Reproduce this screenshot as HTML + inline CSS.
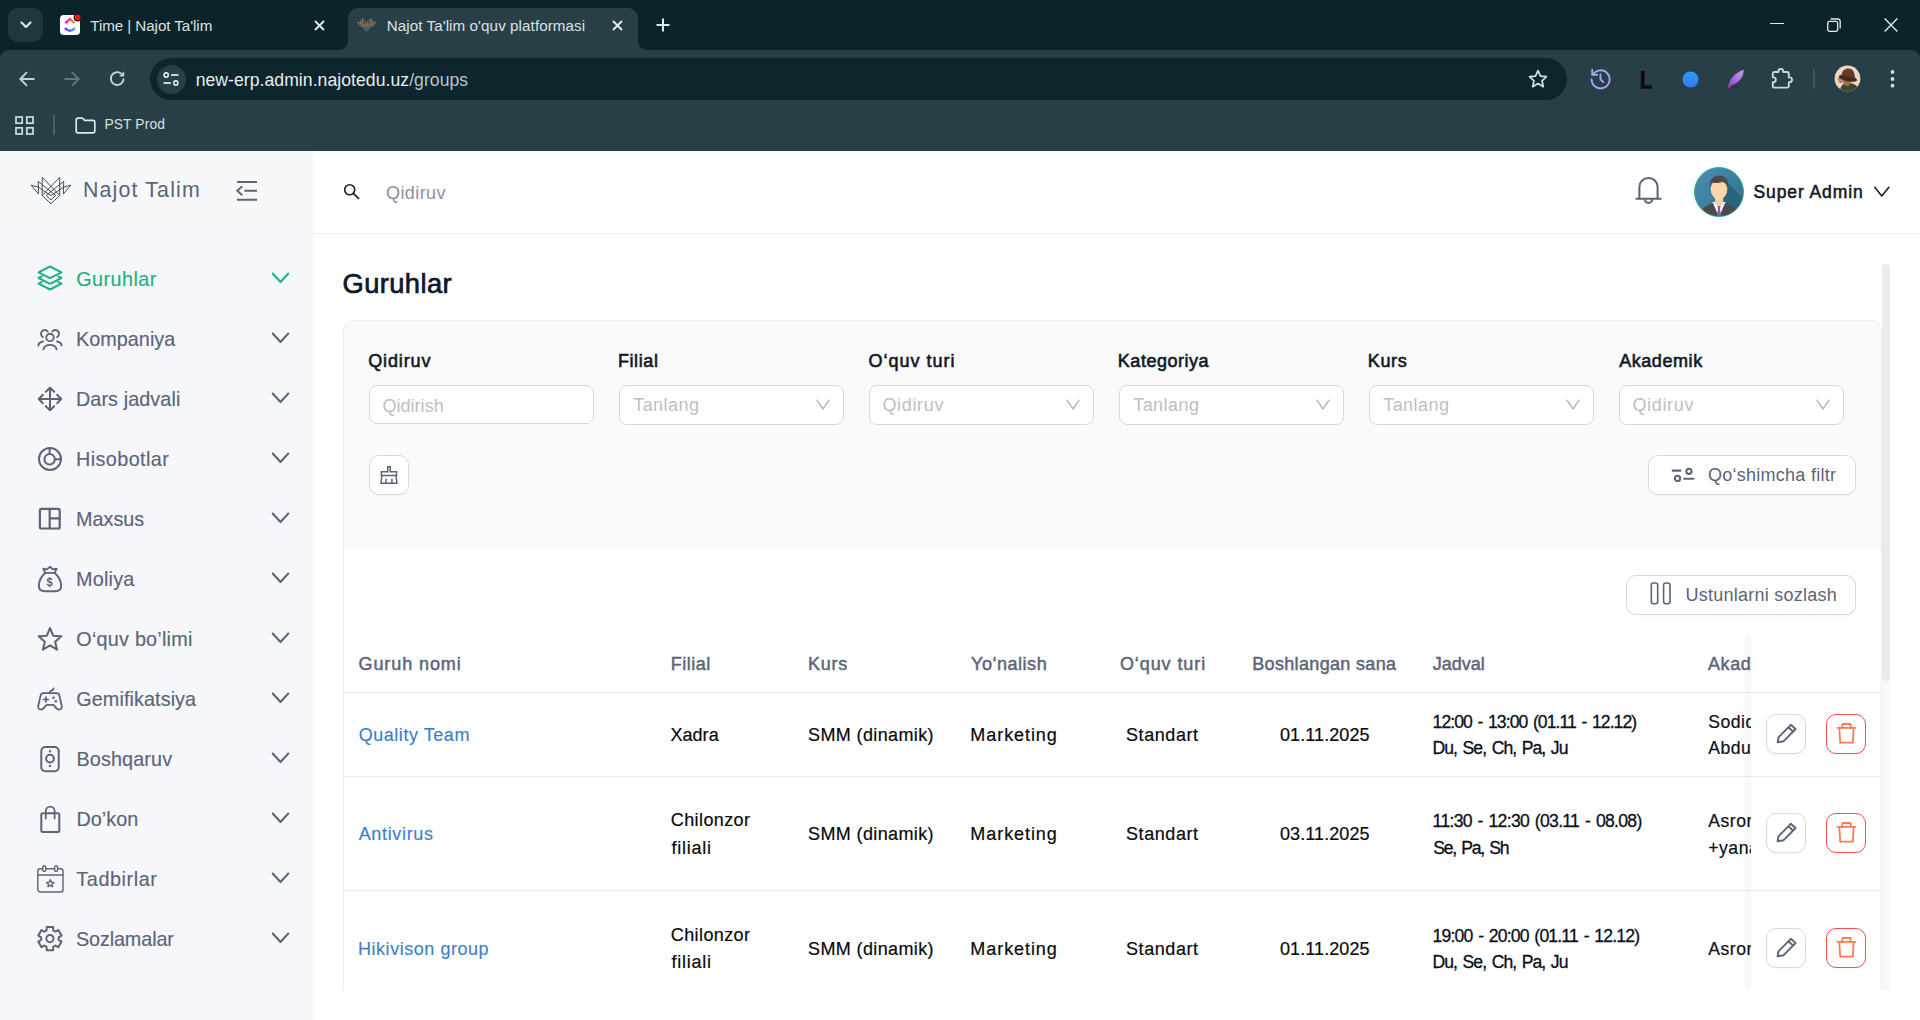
<!DOCTYPE html>
<html lang="uz">
<head>
<meta charset="utf-8">
<title>Najot Ta'lim o'quv platformasi</title>
<style>
*{box-sizing:border-box;margin:0;padding:0}
html,body{width:1920px;height:1020px;overflow:hidden;background:#fff;font-family:"Liberation Sans","DejaVu Sans",sans-serif;}
body{position:relative}
.abs{position:absolute}
svg{display:block;overflow:visible}
.tx{position:absolute;white-space:nowrap}
/* ---------- browser chrome ---------- */
#chrome{position:absolute;left:0;top:0;width:1920px;height:151px;background:#0b2329;color:#dfe7ea}
#toolbar{position:absolute;left:0;top:50px;width:1920px;height:101px;background:#283f47;border-radius:9px 9px 0 0}
#tabsearch{position:absolute;left:8px;top:8px;width:35px;height:34px;border-radius:10px;background:#21373f}
#tab2{position:absolute;left:348px;top:8px;width:290px;height:42px;background:#283f47;border-radius:10px 10px 0 0}
#tab2:before,#tab2:after{content:"";position:absolute;bottom:0;width:10px;height:10px}
#tab2:before{left:-10px;background:radial-gradient(circle at 0 0,transparent 10px,#283f47 10.5px)}
#tab2:after{right:-10px;background:radial-gradient(circle at 100% 0,transparent 10px,#283f47 10.5px)}
.tabtxt{position:absolute;top:16px;font-size:15.2px;line-height:20px;color:#d9e1e4;white-space:nowrap}
#omni{position:absolute;left:150px;top:58px;width:1417px;height:42px;border-radius:21px;background:#0d252c}
#siteinfo{position:absolute;left:156.5px;top:64.5px;width:29px;height:29px;border-radius:14.5px;background:#283f47}
#url{position:absolute;left:195.64px;top:69.3px;letter-spacing:0.051px;font-size:17.6px;line-height:22px;color:#e6edef;white-space:nowrap}
#url span{color:#b8c6cb}
#bm{position:absolute;left:104.47px;top:115px;font-size:13.8px;line-height:20px;letter-spacing:0.12px;color:#d9e1e4;white-space:nowrap}
/* ---------- page ---------- */
#side{position:absolute;left:0;top:151px;width:313px;height:869px;background:#f6f7fa}
#sidehead{position:absolute;left:0;top:0;width:313px;height:81px;background:#f7f8f9}
#main{position:absolute;left:313px;top:151px;width:1607px;height:869px;background:#fff}
#hdr{position:absolute;left:313px;top:151px;width:1607px;height:83px;border-bottom:1px solid #eeeeee;background:#fff}
.inp{position:absolute;height:40px;width:225px;border:1px solid #d9d9d9;border-radius:8px;background:#fff}
.btn{position:absolute;height:40px;border:1px solid #d9d9d9;border-radius:10px;background:#fff;box-shadow:0 2px 0 rgba(0,0,0,.02)}
.ab{position:absolute;width:40px;height:40px;border:1px solid #d9d9d9;border-radius:10px;background:#fff;box-shadow:0 2px 0 rgba(0,0,0,.02)}
.ab.del{border-color:#ff4d4f}
.hl{position:absolute;left:344px;width:1537px;height:1px;background:#ebebeb}
</style>
</head>
<body>
<div id="chrome">
  <div id="tabsearch"></div>
  <div id="toolbar"></div>
  <div id="tab2"></div>
  <div class="tabtxt" style="left:90.27px;letter-spacing:-0.071px">Time | Najot Ta'lim</div>
  <div class="tabtxt" style="left:386.65px;letter-spacing:0.076px">Najot Ta'lim o'quv platformasi</div>
  <div id="omni"></div>
  <div id="siteinfo"></div>
  <div id="url">new-erp.admin.najotedu.uz<span>/groups</span></div>
  <div id="bm">PST Prod</div>

  <!-- tab search chevron -->
  <svg class="abs" style="left:20px;top:21px" width="12" height="8" viewBox="0 0 12 8"><path d="M1.5 1.5 L6 6 L10.5 1.5" fill="none" stroke="#dfe7ea" stroke-width="2.2" stroke-linecap="round" stroke-linejoin="round"/></svg>
  <!-- tab1 favicon -->
  <svg class="abs" style="left:59px;top:13px" width="24" height="24" viewBox="0 0 24 24"><defs><linearGradient id="cu1" x1="0" y1="0" x2="1" y2="0"><stop offset="0" stop-color="#f500d8"/><stop offset=".5" stop-color="#ff4f7a"/><stop offset="1" stop-color="#ffa600"/></linearGradient><linearGradient id="cu2" x1="0" y1="0" x2="1" y2="0"><stop offset="0" stop-color="#7b2bff"/><stop offset="1" stop-color="#2fb6ff"/></linearGradient></defs>
    <rect x="1" y="2" width="20" height="20" rx="3.800" fill="#fff"/>
    <circle cx="18.600" cy="4.500" r="4" fill="#0b2329"/><circle cx="18.600" cy="4.500" r="2.900" fill="#ff1200"/>
    <path d="M6.400 10.200 L11 5.900 L15.600 10.200" fill="none" stroke="url(#cu1)" stroke-width="2.500" stroke-linejoin="miter"/>
    <path d="M6 15 Q11 20.600 16 15" fill="none" stroke="url(#cu2)" stroke-width="2.500"/>
  </svg>
  <!-- tab close x -->
  <svg class="abs" style="left:314px;top:20px" width="11" height="11" viewBox="0 0 11 11"><path d="M1 1 L10 10 M10 1 L1 10" stroke="#e3eaec" stroke-width="1.9" stroke-linecap="butt"/></svg>
  <svg class="abs" style="left:612px;top:20px" width="11" height="11" viewBox="0 0 11 11"><path d="M1 1 L10 10 M10 1 L1 10" stroke="#e3eaec" stroke-width="1.9" stroke-linecap="butt"/></svg>
  <!-- tab2 favicon -->
  <svg class="abs" style="left:355.300px;top:16px" width="23.400" height="16.850" viewBox="0 0 50 36"><g fill="none" stroke="#9a8262" stroke-width="1.700">
<path d="M5.100 13.200 L12.500 22 L12.200 9.400 L29.800 23.500 L24.950 27.900 L20.100 23.500 L37.700 9.400 L37.400 22 L44.800 13.200"/>
<path d="M5.100 13.200 L12.300 15.200 L24.950 23.600 L37.600 15.200 L44.800 13.200"/>
<path d="M16.200 23.500 V5.300 L33.700 23.500 L24.950 31.800 Z"/>
<path d="M33.700 23.500 V5.300 L16.200 23.500"/></g></svg>
  <!-- new tab plus -->
  <svg class="abs" style="left:656px;top:18px" width="14" height="14" viewBox="0 0 14 14"><path d="M7 0.5 V13.5 M0.5 7 H13.5" stroke="#e3eaec" stroke-width="2"/></svg>
  <!-- window controls -->
  <div class="abs" style="left:1770px;top:23px;width:14px;height:1.3px;background:#e3eaec"></div>
  <svg class="abs" style="left:1827px;top:18px" width="14" height="14" viewBox="0 0 14 14"><rect x="0.7" y="3.3" width="10" height="10" rx="2" fill="none" stroke="#e3eaec" stroke-width="1.3"/><path d="M3.6 1 H10.6 Q13.2 1 13.2 3.6 V10.4" fill="none" stroke="#e3eaec" stroke-width="1.3"/></svg>
  <svg class="abs" style="left:1884px;top:18px" width="14" height="14" viewBox="0 0 14 14"><path d="M0.6 0.6 L13.4 13.4 M13.4 0.6 L0.6 13.4" stroke="#e3eaec" stroke-width="1.4"/></svg>
  <!-- nav -->
  <svg class="abs" style="left:19px;top:71px" width="16" height="16" viewBox="0 0 16 16"><path d="M15.5 8 H2 M8 1.2 L1.3 8 L8 14.8" fill="none" stroke="#c3d2d7" stroke-width="1.9"/></svg>
  <svg class="abs" style="left:64px;top:71px" width="16" height="16" viewBox="0 0 16 16"><path d="M0.5 8 H14 M8 1.2 L14.7 8 L8 14.8" fill="none" stroke="#62777f" stroke-width="1.9"/></svg>
  <svg class="abs" style="left:109px;top:70px" width="17" height="17" viewBox="0 0 17 17"><path d="M14.6 8.5 A6.4 6.4 0 1 1 12.6 3.9" fill="none" stroke="#c3d2d7" stroke-width="1.9"/><path d="M15.2 1.2 V6.4 H10 Z" fill="#c3d2d7"/></svg>
  <!-- site info tune icon -->
  <svg class="abs" style="left:163px;top:72px" width="16" height="14" viewBox="0 0 16 14"><circle cx="3.2" cy="3" r="2.1" fill="none" stroke="#e3eaec" stroke-width="1.6"/><path d="M8 3 H15.5" stroke="#e3eaec" stroke-width="1.7"/><circle cx="12.8" cy="11" r="2.1" fill="none" stroke="#e3eaec" stroke-width="1.6"/><path d="M0.5 11 H8" stroke="#e3eaec" stroke-width="1.7"/></svg>
  <!-- star -->
  <svg class="abs" style="left:1528px;top:69px" width="20" height="19" viewBox="0 0 20 19"><path d="M10 1.6 L12.5 7.1 L18.5 7.7 L14 11.8 L15.3 17.7 L10 14.6 L4.7 17.7 L6 11.8 L1.5 7.7 L7.5 7.1 Z" fill="none" stroke="#d5e0e4" stroke-width="1.7" stroke-linejoin="round"/></svg>
  <!-- ext: history -->
  <svg class="abs" style="left:1589px;top:68px" width="23" height="22" viewBox="0 0 23 22"><defs><linearGradient id="hg" x1="0" y1="0" x2="1" y2="1"><stop offset="0" stop-color="#8fb4f5"/><stop offset="1" stop-color="#b69cf0"/></linearGradient></defs><path d="M4.2 6.2 A9 9 0 1 1 2.6 11.5" fill="none" stroke="url(#hg)" stroke-width="1.9" stroke-linecap="round"/><path d="M3.2 1.8 V6.8 H8.2" fill="none" stroke="url(#hg)" stroke-width="1.9" stroke-linecap="round" stroke-linejoin="round"/><path d="M11.5 6.4 V11.4 L14.2 14" fill="none" stroke="url(#hg)" stroke-width="1.9" stroke-linecap="round"/></svg>
  <!-- ext: L -->
  <svg class="abs" style="left:1640px;top:71px" width="13" height="18" viewBox="0 0 13 18"><path d="M0.8 0 H4.6 V14.6 H12 V17.8 H0.8 Z" fill="#0b0b0d"/></svg>
  <!-- ext: blue circle -->
  <svg class="abs" style="left:1682px;top:71px" width="17" height="17" viewBox="0 0 17 17"><defs><linearGradient id="bg1" x1="0" y1="0" x2="0" y2="1"><stop offset="0" stop-color="#2b9bf7"/><stop offset="1" stop-color="#3a78ea"/></linearGradient></defs><circle cx="8.5" cy="8.5" r="8" fill="url(#bg1)"/></svg>
  <!-- ext: feather -->
  <svg class="abs" style="left:1727px;top:69px" width="18" height="21" viewBox="0 0 18 21"><defs><linearGradient id="fg" x1="0" y1="1" x2="1" y2="0"><stop offset="0" stop-color="#8a3fc4"/><stop offset="1" stop-color="#c9a0ee"/></linearGradient></defs><path d="M1 19.5 C1.5 12 6 4.5 16.8 0.8 C16.5 7 13.5 13.5 4.5 16.4 Z" fill="url(#fg)"/><path d="M1 19.8 C4 19.4 8 18.6 11.5 16.6" fill="none" stroke="#3d2352" stroke-width="1"/></svg>
  <!-- ext: puzzle -->
  <svg class="abs" style="left:1771px;top:67px" width="22" height="22" viewBox="0 0 22 22"><path d="M3.300 5 H7.400 V4.400 A2.400 2.400 0 0 1 12.200 4.400 V5 H16.300 Q17.800 5 17.800 6.500 V10.400 H18.600 A2.400 2.400 0 0 1 18.600 15.200 H17.800 V19.100 Q17.800 20.600 16.300 20.600 H3.300 Q1.800 20.600 1.800 19.100 V15.200 H2.400 A2.400 2.400 0 0 0 2.400 10.400 H1.800 V6.500 Q1.800 5 3.300 5 Z" fill="none" stroke="#c2dae1" stroke-width="1.900" stroke-linejoin="round"/></svg>
  <div class="abs" style="left:1813px;top:69px;width:2px;height:20px;background:#3f575f;border-radius:1px"></div>
  <!-- avatar -->
  <svg class="abs" style="left:1834px;top:65px" width="27" height="27" viewBox="0 0 27 27"><defs><clipPath id="avc"><circle cx="13.500" cy="13.500" r="12.900"/></clipPath></defs><g clip-path="url(#avc)"><rect width="27" height="27" fill="#ead9c8"/>
  <path d="M6 27 C6 21 9 18 14 18 C20 18 24.500 20.500 25 27 Z" fill="#3c4a2a"/>
  <path d="M9 15 C9 20 12 21.500 14 21 C16 20.500 17 18 16.500 15 Z" fill="#a06c55"/>
  <ellipse cx="6.300" cy="14.800" rx="2.300" ry="3.600" fill="#b98068" transform="rotate(-20 6.300 14.800)"/>
  <ellipse cx="14" cy="13.200" rx="9.300" ry="3.100" fill="#47291c" transform="rotate(12 14 13.200)"/>
  <path d="M7.500 11.500 C7.500 5.500 11 3.500 14.500 3.500 C18.500 3.500 21 6.500 21 13.800 C17 12 11 11 7.500 11.500 Z" fill="#633c29"/>
  </g></svg>
  <!-- menu dots -->
  <svg class="abs" style="left:1890px;top:69px" width="5" height="20" viewBox="0 0 5 20"><circle cx="2.5" cy="3" r="1.9" fill="#cfdde2"/><circle cx="2.5" cy="10" r="1.900" fill="#cfdde2"/><circle cx="2.5" cy="16.700" r="1.9" fill="#cfdde2"/></svg>
  <!-- bookmarks bar -->
  <svg class="abs" style="left:15px;top:116px" width="19" height="19" viewBox="0 0 19 19"><g fill="none" stroke="#cfdde2" stroke-width="1.7"><rect x="1" y="1" width="6.200" height="6.2"/><rect x="11.8" y="1" width="6.2" height="6.200"/><rect x="1" y="11.8" width="6.2" height="6.2"/><rect x="11.8" y="11.800" width="6.2" height="6.2"/></g></svg>
  <div class="abs" style="left:53px;top:115px;width:1.500px;height:20px;background:#4a616a"></div>
  <svg class="abs" style="left:75px;top:117px" width="21" height="17" viewBox="0 0 21 17"><path d="M1.2 3 Q1.2 1.2 3 1.2 H7.600 L9.600 3.400 H18 Q19.800 3.400 19.800 5.200 V14 Q19.800 15.800 18 15.800 H3 Q1.2 15.800 1.200 14 Z" fill="none" stroke="#dfe7ea" stroke-width="1.7" stroke-linejoin="round"/></svg>
</div>
<div id="side"><div id="sidehead"></div></div>
<svg class="abs" style="left:26px;top:172px" width="50" height="36" viewBox="0 0 50 36"><g fill="none" stroke="#464c57" stroke-width="1" stroke-linejoin="miter">
<path d="M5.100 13.200 L12.500 22 L12.200 9.400 L29.800 23.500 L24.950 27.900 L20.100 23.500 L37.700 9.400 L37.400 22 L44.800 13.200"/>
<path d="M5.100 13.200 L12.300 15.200 L24.950 23.600 L37.600 15.200 L44.800 13.200"/>
<path d="M16.200 23.500 V5.300 L33.700 23.500 L24.950 31.800 Z"/>
<path d="M33.700 23.500 V5.300 L16.200 23.500"/>
</g></svg>
<div class="tx " style="left:82.95px;top:175px;font-size:21.4px;line-height:30px;color:#5b6479;letter-spacing:1.14px;">Najot Talim</div>
<svg class="abs" style="left:236px;top:180px" width="22" height="22" viewBox="0 0 22 22"><g fill="none" stroke="#5b6479" stroke-width="1.900"><path d="M1 2 H21 M8.500 10.800 H21 M1 19.800 H21"/><path d="M6.200 6.300 L1.300 10.800 L6.200 15.300" stroke-linejoin="miter"/></g></svg>
<div class="tx " style="left:76.29px;top:265px;font-size:19.8px;line-height:28px;color:#1ab27f;letter-spacing:0.448px;-webkit-text-stroke:0.15px #1ab27f;">Guruhlar</div>
<svg class="abs" style="left:271px;top:272px" width="19" height="12" viewBox="0 0 19 12"><path d="M1.700 1.500 L9.500 10 L17.300 1.500" fill="none" stroke="#1ab27f" stroke-width="2" stroke-linecap="round" stroke-linejoin="round"/></svg>
<div class="tx " style="left:75.95px;top:325px;font-size:19.8px;line-height:28px;color:#5b6479;letter-spacing:0.051px;-webkit-text-stroke:0.15px #5b6479;">Kompaniya</div>
<svg class="abs" style="left:271px;top:332px" width="19" height="12" viewBox="0 0 19 12"><path d="M1.700 1.500 L9.500 10 L17.300 1.500" fill="none" stroke="#5b6479" stroke-width="2" stroke-linecap="round" stroke-linejoin="round"/></svg>
<div class="tx " style="left:75.95px;top:385px;font-size:19.8px;line-height:28px;color:#5b6479;letter-spacing:0.097px;-webkit-text-stroke:0.15px #5b6479;">Dars jadvali</div>
<svg class="abs" style="left:271px;top:392px" width="19" height="12" viewBox="0 0 19 12"><path d="M1.700 1.500 L9.500 10 L17.300 1.500" fill="none" stroke="#5b6479" stroke-width="2" stroke-linecap="round" stroke-linejoin="round"/></svg>
<div class="tx " style="left:75.95px;top:445px;font-size:19.8px;line-height:28px;color:#5b6479;letter-spacing:0.429px;-webkit-text-stroke:0.15px #5b6479;">Hisobotlar</div>
<svg class="abs" style="left:271px;top:452px" width="19" height="12" viewBox="0 0 19 12"><path d="M1.700 1.500 L9.500 10 L17.300 1.500" fill="none" stroke="#5b6479" stroke-width="2" stroke-linecap="round" stroke-linejoin="round"/></svg>
<div class="tx " style="left:75.95px;top:505px;font-size:19.8px;line-height:28px;color:#5b6479;letter-spacing:0.033px;-webkit-text-stroke:0.15px #5b6479;">Maxsus</div>
<svg class="abs" style="left:271px;top:512px" width="19" height="12" viewBox="0 0 19 12"><path d="M1.700 1.500 L9.500 10 L17.300 1.500" fill="none" stroke="#5b6479" stroke-width="2" stroke-linecap="round" stroke-linejoin="round"/></svg>
<div class="tx " style="left:75.95px;top:565px;font-size:19.8px;line-height:28px;color:#5b6479;letter-spacing:0.25px;-webkit-text-stroke:0.15px #5b6479;">Moliya</div>
<svg class="abs" style="left:271px;top:572px" width="19" height="12" viewBox="0 0 19 12"><path d="M1.700 1.500 L9.500 10 L17.300 1.500" fill="none" stroke="#5b6479" stroke-width="2" stroke-linecap="round" stroke-linejoin="round"/></svg>
<div class="tx " style="left:76.34px;top:625px;font-size:19.8px;line-height:28px;color:#5b6479;letter-spacing:0.231px;-webkit-text-stroke:0.15px #5b6479;">O‘quv bo’limi</div>
<svg class="abs" style="left:271px;top:632px" width="19" height="12" viewBox="0 0 19 12"><path d="M1.700 1.500 L9.500 10 L17.300 1.500" fill="none" stroke="#5b6479" stroke-width="2" stroke-linecap="round" stroke-linejoin="round"/></svg>
<div class="tx " style="left:76.29px;top:685px;font-size:19.8px;line-height:28px;color:#5b6479;letter-spacing:0.092px;-webkit-text-stroke:0.15px #5b6479;">Gemifikatsiya</div>
<svg class="abs" style="left:271px;top:692px" width="19" height="12" viewBox="0 0 19 12"><path d="M1.700 1.500 L9.500 10 L17.300 1.500" fill="none" stroke="#5b6479" stroke-width="2" stroke-linecap="round" stroke-linejoin="round"/></svg>
<div class="tx " style="left:76.45px;top:745px;font-size:19.8px;line-height:28px;color:#5b6479;letter-spacing:0.134px;-webkit-text-stroke:0.15px #5b6479;">Boshqaruv</div>
<svg class="abs" style="left:271px;top:752px" width="19" height="12" viewBox="0 0 19 12"><path d="M1.700 1.500 L9.500 10 L17.300 1.500" fill="none" stroke="#5b6479" stroke-width="2" stroke-linecap="round" stroke-linejoin="round"/></svg>
<div class="tx " style="left:76.45px;top:805px;font-size:19.8px;line-height:28px;color:#5b6479;letter-spacing:0.065px;-webkit-text-stroke:0.15px #5b6479;">Do’kon</div>
<svg class="abs" style="left:271px;top:812px" width="19" height="12" viewBox="0 0 19 12"><path d="M1.700 1.500 L9.500 10 L17.300 1.500" fill="none" stroke="#5b6479" stroke-width="2" stroke-linecap="round" stroke-linejoin="round"/></svg>
<div class="tx " style="left:76.34px;top:865px;font-size:19.8px;line-height:28px;color:#5b6479;letter-spacing:0.585px;-webkit-text-stroke:0.15px #5b6479;">Tadbirlar</div>
<svg class="abs" style="left:271px;top:872px" width="19" height="12" viewBox="0 0 19 12"><path d="M1.700 1.500 L9.500 10 L17.300 1.500" fill="none" stroke="#5b6479" stroke-width="2" stroke-linecap="round" stroke-linejoin="round"/></svg>
<div class="tx " style="left:75.88px;top:925px;font-size:19.8px;line-height:28px;color:#5b6479;letter-spacing:-0.097px;-webkit-text-stroke:0.15px #5b6479;">Sozlamalar</div>
<svg class="abs" style="left:271px;top:932px" width="19" height="12" viewBox="0 0 19 12"><path d="M1.700 1.500 L9.500 10 L17.300 1.500" fill="none" stroke="#5b6479" stroke-width="2" stroke-linecap="round" stroke-linejoin="round"/></svg>
<svg class="abs" style="left:37px;top:265.2px" width="26" height="26" viewBox="0 0 26 26"><g fill="none" stroke="#1ab27f" stroke-width="2" stroke-linecap="round" stroke-linejoin="round"><path d="M13 1.500 L24.500 7.300 L13 13.100 L1.500 7.300 Z"/><path d="M4.800 11.400 L1.500 13 L13 18.800 L24.500 13 L21.200 11.400"/><path d="M4.800 17.100 L1.500 18.700 L13 24.500 L24.500 18.700 L21.200 17.100"/></g></svg>
<svg class="abs" style="left:37px;top:328px" width="26" height="23" viewBox="0 0 26 23"><g fill="none" stroke="#5b6479" stroke-width="1.9" stroke-linecap="round" stroke-linejoin="round"><circle cx="13" cy="9.450" r="3.750"/><path d="M6.500 21.400 A6.500 4.500 0 0 1 19.500 21.400"/><path d="M10.650 3.400 A3.750 3.750 0 1 0 5.880 9.010"/><path d="M15.350 3.400 A3.750 3.750 0 1 1 20.120 9.010"/><path d="M1.400 17.500 C1.600 15.200 3.600 13.900 5.900 13.500"/><path d="M24.600 17.500 C24.400 15.200 22.400 13.900 20.100 13.500"/></g></svg>
<svg class="abs" style="left:37px;top:385.7px" width="26" height="26" viewBox="0 0 26 26"><g fill="none" stroke="#5b6479" stroke-width="2" stroke-linecap="round" stroke-linejoin="round"><path d="M13 2 V24 M2 13 H24"/><path d="M8.800 5.800 L13 1.800 L17.200 5.800"/><path d="M8.800 20.200 L13 24.200 L17.200 20.200"/><path d="M5.800 8.800 L1.800 13 L5.800 17.200"/><path d="M20.200 8.800 L24.200 13 L20.200 17.200"/></g></svg>
<svg class="abs" style="left:37px;top:445.7px" width="26" height="26" viewBox="0 0 26 26"><g fill="none" stroke="#5b6479" stroke-width="2" stroke-linecap="round" stroke-linejoin="round"><circle cx="13" cy="13.050" r="11"/><circle cx="12.600" cy="13.300" r="5.200"/><path d="M12.600 8.100 V2.200 M17.800 13.300 H23.800"/></g></svg>
<svg class="abs" style="left:37px;top:506px" width="26" height="26" viewBox="0 0 26 26"><g fill="none" stroke="#5b6479" stroke-width="2.2" stroke-linecap="round" stroke-linejoin="round"><rect x="2.900" y="2.900" width="19.800" height="19.600" rx="1.500"/><path d="M12.700 2.900 V22.500 M12.700 12.400 H22.700"/></g></svg>
<svg class="abs" style="left:37px;top:565px" width="26" height="28" viewBox="0 0 26 28"><g fill="none" stroke="#5b6479" stroke-width="1.9" stroke-linecap="round" stroke-linejoin="round"><path d="M8.300 7.900 C4.500 11 1.900 16.500 1.900 21.200 C1.900 24.500 4.500 26.200 8 26.200 H18 C21.500 26.200 24.100 24.500 24.100 21.200 C24.100 16.500 21.500 11 17.700 7.900 Z"/><path d="M8.300 7.900 L6.300 3.600 L9.900 4.400 L13 1.700 L16.100 4.400 L19.700 3.600 L17.700 7.900"/><text x="12.600" y="21" font-family="Liberation Sans, sans-serif" font-size="11" font-weight="700" text-anchor="middle" fill="#5b6479" stroke="none">$</text><path d="M12.600 12.100 V13.300 M12.600 21 V22.300" stroke-width="1.300" stroke-linecap="butt"/></g></svg>
<svg class="abs" style="left:37px;top:625.5px" width="26" height="27" viewBox="0 0 26 27"><g fill="none" stroke="#5b6479" stroke-width="2" stroke-linecap="round" stroke-linejoin="round"><path d="M13.00 2.00 L16.17 9.63 L24.41 10.29 L18.14 15.67 L20.05 23.71 L13.00 19.40 L5.95 23.71 L7.86 15.67 L1.59 10.29 L9.83 9.63 Z"/></g></svg>
<svg class="abs" style="left:37px;top:687px" width="26" height="24" viewBox="0 0 26 24"><g fill="none" stroke="#5b6479" stroke-width="1.8" stroke-linecap="round" stroke-linejoin="round"><path d="M6.300 6.140 H19.700 C21.600 6.140 22.200 7.600 22.500 8.900 L24.800 19.300 C25.300 21.600 23.400 22.800 21.200 22.400 C19.300 22 18.400 20 17.400 18.900 C16.800 18.200 16.400 17.900 15.600 17.900 H10.400 C9.600 17.900 9.200 18.200 8.600 18.900 C7.600 20 6.700 22 4.800 22.400 C2.600 22.800 0.700 21.600 1.200 19.300 L3.500 8.900 C3.800 7.600 4.400 6.140 6.300 6.140 Z"/><path d="M12.800 6.100 V5 C12.800 3.600 14.200 3.600 15.300 3.300 C16.300 3 16.500 2.600 16.500 1.300"/><path d="M6.500 12.500 H11.300 M8.900 10.100 V14.900" stroke-width="1.700"/><circle cx="16.450" cy="10.840" r="1.250" fill="#5b6479" stroke="none"/><circle cx="18.800" cy="14.300" r="1.250" fill="#5b6479" stroke="none"/></g></svg>
<svg class="abs" style="left:37px;top:745px" width="26" height="28" viewBox="0 0 26 28"><g fill="none" stroke="#5b6479" stroke-width="2" stroke-linecap="round" stroke-linejoin="round"><rect x="4.300" y="2" width="17.400" height="24.200" rx="4"/><circle cx="13" cy="13.600" r="3.900"/><circle cx="13" cy="6.200" r="0.500" stroke-width="1.400"/><circle cx="13" cy="21" r="0.500" stroke-width="1.400"/></g></svg>
<svg class="abs" style="left:37px;top:804px" width="26" height="30" viewBox="0 0 26 30"><g fill="none" stroke="#5b6479" stroke-width="2" stroke-linecap="round" stroke-linejoin="round"><rect x="4.300" y="9.300" width="18" height="18.600" rx="1.500"/><path d="M8.800 14.500 V7 A4.400 4.400 0 0 1 17.600 7 V14.500" stroke-width="1.800"/></g></svg>
<svg class="abs" style="left:36.5px;top:865.2px" width="27" height="28" viewBox="0 0 27 28"><g fill="none" stroke="#5b6479" stroke-width="1.4" stroke-linecap="round" stroke-linejoin="round"><rect x="0.800" y="3.800" width="25.200" height="23.200" rx="2.500"/><path d="M0.800 10 H26"/><rect x="5.700" y="0.800" width="3" height="5.600" rx="1.500" fill="#f6f7f9"/><rect x="17.600" y="0.800" width="3" height="5.600" rx="1.500" fill="#f6f7f9"/><path d="M13.30 14.70 L14.36 17.14 L17.01 17.39 L15.01 19.16 L15.59 21.76 L13.30 20.40 L11.01 21.76 L11.59 19.16 L9.59 17.39 L12.24 17.14 Z"/></g></svg>
<svg class="abs" style="left:37px;top:925px" width="26" height="28" viewBox="0 0 26 28"><g fill="none" stroke="#5b6479" stroke-width="2" stroke-linecap="round" stroke-linejoin="round"><path d="M9.58 5.45 L9.67 2.04 L16.13 2.04 L16.22 5.45 L18.29 6.65 L21.30 5.03 L24.52 10.62 L21.62 12.41 L21.62 14.79 L24.52 16.58 L21.30 22.17 L18.29 20.55 L16.22 21.75 L16.13 25.16 L9.67 25.16 L9.58 21.75 L7.51 20.55 L4.50 22.17 L1.28 16.58 L4.18 14.79 L4.18 12.41 L1.28 10.62 L4.50 5.03 L7.51 6.65 Z"/><circle cx="12.900" cy="13.600" r="3.600"/></g></svg>
<div id="main"></div>
<div id="hdr"></div>
<svg class="abs" style="left:343px;top:184px" width="18" height="17" viewBox="0 0 18 17"><circle cx="6.700" cy="5.750" r="5" fill="none" stroke="#1e2533" stroke-width="1.700"/><path d="M10.300 9.400 L16 14.800" stroke="#1e2533" stroke-width="1.800" stroke-linecap="butt"/></svg>
<div class="tx " style="left:386.05px;top:180px;font-size:18px;line-height:26px;color:#8b8fa3;letter-spacing:0.414px;">Qidiruv</div>
<svg class="abs" style="left:1635px;top:176px" width="27" height="29" viewBox="0 0 27 29"><g fill="none" stroke="#5b6479" stroke-width="2" stroke-linecap="round" stroke-linejoin="round"><path d="M4.400 22.500 V11 A9.100 9.100 0 0 1 22.600 11 V22.500"/><path d="M1.300 22.750 H25.700"/><path d="M9.900 23.900 A3.600 3 0 0 0 17.100 23.900"/></g></svg>
<svg class="abs" style="left:1694px;top:166.600px" width="50" height="50" viewBox="0 0 50 50"><defs><clipPath id="uav"><circle cx="25" cy="25" r="24"/></clipPath><linearGradient id="uag" x1="0" y1="0" x2="1" y2="1"><stop offset="0" stop-color="#4b8fb3"/><stop offset="1" stop-color="#2f6f8c"/></linearGradient></defs>
<circle cx="25" cy="25" r="24.500" fill="url(#uag)" stroke="#27b58a" stroke-width="1"/>
<g clip-path="url(#uav)"><path d="M30 12 L52 34 L52 52 L30 52 Z" fill="#2a6079" opacity=".85"/>
<path d="M5 50 C6 41 12 38.500 18 36.500 L32 36.500 C38 38.500 44 41 45 50 Z" fill="#4a4a4f"/>
<path d="M18.500 35 L25 50 L31.500 35 Z" fill="#fff"/><path d="M23.300 38.500 H26.700 L26 42 L27.400 50 H22.600 L24 42 Z" fill="#a04aa8"/>
<path d="M21 28 H29 V37 L25 39.500 L21 37 Z" fill="#f5cfa3"/>
<ellipse cx="25" cy="22.500" rx="8.300" ry="10" fill="#fdd7ab"/>
<path d="M15.800 22 C14.500 12 20 8.500 25.500 8.500 C31 8.500 35.500 12 34.200 22 C33.500 17.500 31 15.500 28 15 C24 16.500 19 16 17.500 15.500 C16.500 17.500 16.200 19.500 15.800 22 Z" fill="#4b4b4b"/></g></svg>
<div class="tx " style="left:1753.49px;top:179px;font-size:17.5px;line-height:26px;color:#111827;letter-spacing:0.897px;-webkit-text-stroke:0.55px #111827;">Super Admin</div>
<svg class="abs" style="left:1873px;top:186px" width="18" height="12" viewBox="0 0 18 12"><path d="M1.700 1.300 L8.800 10 L15.900 1.300" fill="none" stroke="#1a1f2e" stroke-width="1.600" stroke-linecap="round" stroke-linejoin="round"/></svg>
<div class="tx " style="left:342.59px;top:265px;font-size:27.3px;line-height:37px;color:#0f172a;letter-spacing:0.401px;-webkit-text-stroke:0.7px #0f172a;">Guruhlar</div>
<div class="abs" style="left:343px;top:320px;width:1539px;height:670px;border:1px solid #eeeeee;border-bottom:none;border-radius:12px 12px 0 0;background:#fff;overflow:hidden"><div class="abs" style="left:0;top:0;width:1537px;height:229px;background:#fafafa"></div></div>
<div class="abs" style="left:1882px;top:264px;width:8px;height:726px;background:#f8f9fa"></div>
<div class="abs" style="left:1882px;top:264px;width:8px;height:417px;background:#ebebeb;border-radius:4px"></div>
<div class="tx " style="left:368.25px;top:348px;font-size:18px;line-height:26px;color:#111827;letter-spacing:0.864px;-webkit-text-stroke:0.6px #111827;">Qidiruv</div>
<div class="inp" style="left:369px;top:385px;height:38.5px"></div>
<div class="tx " style="left:382.55px;top:393px;font-size:18px;line-height:26px;color:#bfbfbf;letter-spacing:0.014px;">Qidirish</div>
<div class="tx " style="left:617.92px;top:348px;font-size:18px;line-height:26px;color:#111827;letter-spacing:0.595px;-webkit-text-stroke:0.6px #111827;">Filial</div>
<div class="inp" style="left:619px;top:385px"></div>
<div class="tx " style="left:633.20px;top:392px;font-size:18px;line-height:26px;color:#bfbfbf;letter-spacing:0.449px;">Tanlang</div>
<svg class="abs" style="left:816px;top:399px" width="14" height="11" viewBox="0 0 14 11"><path d="M1 1.200 L7 10 L13 1.200" fill="none" stroke="#b5b5b5" stroke-width="1.400" stroke-linecap="round" stroke-linejoin="round"/></svg>
<div class="tx " style="left:868.45px;top:348px;font-size:18px;line-height:26px;color:#111827;letter-spacing:0.992px;-webkit-text-stroke:0.6px #111827;">O‘quv turi</div>
<div class="inp" style="left:869px;top:385px"></div>
<div class="tx " style="left:882.45px;top:392px;font-size:18px;line-height:26px;color:#bfbfbf;letter-spacing:0.664px;">Qidiruv</div>
<svg class="abs" style="left:1066px;top:399px" width="14" height="11" viewBox="0 0 14 11"><path d="M1 1.200 L7 10 L13 1.200" fill="none" stroke="#b5b5b5" stroke-width="1.400" stroke-linecap="round" stroke-linejoin="round"/></svg>
<div class="tx " style="left:1117.82px;top:348px;font-size:18px;line-height:26px;color:#111827;letter-spacing:0.524px;-webkit-text-stroke:0.6px #111827;">Kategoriya</div>
<div class="inp" style="left:1119px;top:385px"></div>
<div class="tx " style="left:1133.20px;top:392px;font-size:18px;line-height:26px;color:#bfbfbf;letter-spacing:0.449px;">Tanlang</div>
<svg class="abs" style="left:1316px;top:399px" width="14" height="11" viewBox="0 0 14 11"><path d="M1 1.200 L7 10 L13 1.200" fill="none" stroke="#b5b5b5" stroke-width="1.400" stroke-linecap="round" stroke-linejoin="round"/></svg>
<div class="tx " style="left:1367.82px;top:348px;font-size:18px;line-height:26px;color:#111827;letter-spacing:0.639px;-webkit-text-stroke:0.6px #111827;">Kurs</div>
<div class="inp" style="left:1369px;top:385px"></div>
<div class="tx " style="left:1383.20px;top:392px;font-size:18px;line-height:26px;color:#bfbfbf;letter-spacing:0.449px;">Tanlang</div>
<svg class="abs" style="left:1566px;top:399px" width="14" height="11" viewBox="0 0 14 11"><path d="M1 1.200 L7 10 L13 1.200" fill="none" stroke="#b5b5b5" stroke-width="1.400" stroke-linecap="round" stroke-linejoin="round"/></svg>
<div class="tx " style="left:1619.17px;top:348px;font-size:18px;line-height:26px;color:#111827;letter-spacing:0.567px;-webkit-text-stroke:0.6px #111827;">Akademik</div>
<div class="inp" style="left:1619px;top:385px"></div>
<div class="tx " style="left:1632.45px;top:392px;font-size:18px;line-height:26px;color:#bfbfbf;letter-spacing:0.664px;">Qidiruv</div>
<svg class="abs" style="left:1816px;top:399px" width="14" height="11" viewBox="0 0 14 11"><path d="M1 1.200 L7 10 L13 1.200" fill="none" stroke="#b5b5b5" stroke-width="1.400" stroke-linecap="round" stroke-linejoin="round"/></svg>
<div class="btn" style="left:369px;top:455px;width:40px"></div>
<svg class="abs" style="left:379px;top:465px" width="20" height="20" viewBox="0 0 20 20"><g fill="none" stroke="#5b6479" stroke-width="1.500" stroke-linejoin="miter"><path d="M8.750 6.750 V1.750 H11.250 V6.750 H17.550 V10.400 H2.350 V6.750 Z"/><path d="M3 10.400 L1.900 18.150 H18 L16.900 10.400"/><path d="M7 18.150 V13.800 M12.900 18.150 V13.800"/></g></svg>
<div class="btn" style="left:1648px;top:455px;width:208px"></div>
<svg class="abs" style="left:1671px;top:467px" width="24" height="16" viewBox="0 0 24 16"><g fill="none" stroke="#5b6479" stroke-width="2.100" stroke-linecap="round"><path d="M1.600 3.600 H9.600"/><circle cx="6.500" cy="11.400" r="2.600"/><circle cx="17.900" cy="4.300" r="2.600"/><path d="M13.200 11.700 H22.500"/></g></svg>
<div class="tx " style="left:1707.95px;top:462px;font-size:18px;line-height:26px;color:#5b6479;letter-spacing:0.268px;">Qo‘shimcha filtr</div>
<div class="btn" style="left:1626px;top:575px;width:230px"></div>
<svg class="abs" style="left:1650px;top:582px" width="22" height="23" viewBox="0 0 22 23"><g fill="none" stroke="#5b6479" stroke-width="1.600"><rect x="1.300" y="1" width="6.400" height="20.800" rx="2.200"/><rect x="13.600" y="1" width="6.400" height="20.800" rx="2.200"/></g></svg>
<div class="tx " style="left:1685.61px;top:582px;font-size:18px;line-height:26px;color:#5b6479;letter-spacing:0.246px;">Ustunlarni sozlash</div>
<div class="tx " style="left:358.55px;top:651px;font-size:18px;line-height:26px;color:#5d6679;letter-spacing:0.907px;-webkit-text-stroke:0.5px #5d6679;">Guruh nomi</div>
<div class="tx " style="left:670.67px;top:651px;font-size:18px;line-height:26px;color:#5d6679;letter-spacing:0.535px;-webkit-text-stroke:0.5px #5d6679;">Filial</div>
<div class="tx " style="left:808.02px;top:651px;font-size:18px;line-height:26px;color:#5d6679;letter-spacing:0.705px;-webkit-text-stroke:0.5px #5d6679;">Kurs</div>
<div class="tx " style="left:971.10px;top:651px;font-size:18px;line-height:26px;color:#5d6679;letter-spacing:0.521px;-webkit-text-stroke:0.5px #5d6679;">Yo‘nalish</div>
<div class="tx " style="left:1119.90px;top:651px;font-size:18px;line-height:26px;color:#5d6679;letter-spacing:0.92px;-webkit-text-stroke:0.5px #5d6679;">O‘quv turi</div>
<div class="tx " style="left:1252.27px;top:651px;font-size:18px;line-height:26px;color:#5d6679;letter-spacing:0.332px;-webkit-text-stroke:0.5px #5d6679;">Boshlangan sana</div>
<div class="tx " style="left:1432.77px;top:651px;font-size:18px;line-height:26px;color:#5d6679;letter-spacing:-0.011px;-webkit-text-stroke:0.5px #5d6679;">Jadval</div>
<div class="tx " style="left:1708.00px;top:651px;font-size:18px;line-height:26px;color:#5d6679;letter-spacing:0.6px;-webkit-text-stroke:0.5px #5d6679;">Akademik</div>
<div class="hl" style="top:692px"></div><div class="hl" style="top:776px"></div><div class="hl" style="top:890px"></div>
<div class="tx " style="left:358.63px;top:722px;font-size:18px;line-height:26px;color:#3b7fc9;letter-spacing:0.551px;-webkit-text-stroke:0.15px #3b7fc9;">Quality Team</div>
<div class="tx " style="left:670.50px;top:722px;font-size:18px;line-height:26px;color:#0a0a0a;letter-spacing:0.026px;-webkit-text-stroke:0.2px #0a0a0a;">Xadra</div>
<div class="tx " style="left:808.04px;top:722px;font-size:18px;line-height:26px;color:#0a0a0a;letter-spacing:0.373px;-webkit-text-stroke:0.2px #0a0a0a;">SMM (dinamik)</div>
<div class="tx " style="left:970.37px;top:722px;font-size:18px;line-height:26px;color:#0a0a0a;letter-spacing:0.925px;-webkit-text-stroke:0.2px #0a0a0a;">Marketing</div>
<div class="tx " style="left:1126.04px;top:722px;font-size:18px;line-height:26px;color:#0a0a0a;letter-spacing:0.562px;-webkit-text-stroke:0.2px #0a0a0a;">Standart</div>
<div class="tx " style="left:1280.00px;top:722px;font-size:18px;line-height:26px;color:#0a0a0a;letter-spacing:0.089px;-webkit-text-stroke:0.2px #0a0a0a;">01.11.2025</div>
<div class="tx " style="left:1432.61px;top:709px;font-size:17.6px;line-height:26px;color:#0b1020;letter-spacing:-0.933px;-webkit-text-stroke:0.3px #0b1020;word-spacing:1.6px;">12:00 - 13:00 (01.11 - 12.12)</div>
<div class="tx " style="left:1432.51px;top:735px;font-size:17.6px;line-height:26px;color:#0b1020;letter-spacing:-0.95px;-webkit-text-stroke:0.3px #0b1020;word-spacing:1.6px;">Du, Se, Ch, Pa, Ju</div>
<div class="tx " style="left:1708.30px;top:709px;font-size:17.6px;line-height:26px;color:#0b1020;letter-spacing:0.5px;-webkit-text-stroke:0.2px #0b1020;">Sodiqov</div>
<div class="tx " style="left:1708.30px;top:735px;font-size:17.6px;line-height:26px;color:#0b1020;letter-spacing:0.5px;-webkit-text-stroke:0.2px #0b1020;">Abdulloh</div>
<div class="tx " style="left:358.65px;top:821px;font-size:18px;line-height:26px;color:#3b7fc9;letter-spacing:0.663px;-webkit-text-stroke:0.15px #3b7fc9;">Antivirus</div>
<div class="tx " style="left:670.79px;top:807px;font-size:18px;line-height:26px;color:#0a0a0a;letter-spacing:0.397px;-webkit-text-stroke:0.2px #0a0a0a;">Chilonzor</div>
<div class="tx " style="left:671.45px;top:835px;font-size:18px;line-height:26px;color:#0a0a0a;letter-spacing:0.776px;-webkit-text-stroke:0.2px #0a0a0a;">filiali</div>
<div class="tx " style="left:808.04px;top:821px;font-size:18px;line-height:26px;color:#0a0a0a;letter-spacing:0.373px;-webkit-text-stroke:0.2px #0a0a0a;">SMM (dinamik)</div>
<div class="tx " style="left:970.37px;top:821px;font-size:18px;line-height:26px;color:#0a0a0a;letter-spacing:0.925px;-webkit-text-stroke:0.2px #0a0a0a;">Marketing</div>
<div class="tx " style="left:1126.04px;top:821px;font-size:18px;line-height:26px;color:#0a0a0a;letter-spacing:0.562px;-webkit-text-stroke:0.2px #0a0a0a;">Standart</div>
<div class="tx " style="left:1280.00px;top:821px;font-size:18px;line-height:26px;color:#0a0a0a;letter-spacing:0.089px;-webkit-text-stroke:0.2px #0a0a0a;">03.11.2025</div>
<div class="tx " style="left:1432.61px;top:808px;font-size:17.6px;line-height:26px;color:#0b1020;letter-spacing:-0.704px;-webkit-text-stroke:0.3px #0b1020;word-spacing:1.6px;">11:30 - 12:30 (03.11 - 08.08)</div>
<div class="tx " style="left:1433.16px;top:835px;font-size:17.6px;line-height:26px;color:#0b1020;letter-spacing:-1.223px;-webkit-text-stroke:0.3px #0b1020;word-spacing:1.6px;">Se, Pa, Sh</div>
<div class="tx " style="left:1708.30px;top:808px;font-size:17.6px;line-height:26px;color:#0b1020;letter-spacing:0.5px;-webkit-text-stroke:0.2px #0b1020;">Asrorbek</div>
<div class="tx " style="left:1708.30px;top:835px;font-size:17.6px;line-height:26px;color:#0b1020;letter-spacing:0.5px;-webkit-text-stroke:0.2px #0b1020;">+yana 1</div>
<div class="tx " style="left:358.00px;top:936px;font-size:18px;line-height:26px;color:#3b7fc9;letter-spacing:0.537px;-webkit-text-stroke:0.15px #3b7fc9;">Hikivison group</div>
<div class="tx " style="left:670.79px;top:922px;font-size:18px;line-height:26px;color:#0a0a0a;letter-spacing:0.397px;-webkit-text-stroke:0.2px #0a0a0a;">Chilonzor</div>
<div class="tx " style="left:671.45px;top:949px;font-size:18px;line-height:26px;color:#0a0a0a;letter-spacing:0.776px;-webkit-text-stroke:0.2px #0a0a0a;">filiali</div>
<div class="tx " style="left:808.04px;top:936px;font-size:18px;line-height:26px;color:#0a0a0a;letter-spacing:0.373px;-webkit-text-stroke:0.2px #0a0a0a;">SMM (dinamik)</div>
<div class="tx " style="left:970.37px;top:936px;font-size:18px;line-height:26px;color:#0a0a0a;letter-spacing:0.925px;-webkit-text-stroke:0.2px #0a0a0a;">Marketing</div>
<div class="tx " style="left:1126.04px;top:936px;font-size:18px;line-height:26px;color:#0a0a0a;letter-spacing:0.562px;-webkit-text-stroke:0.2px #0a0a0a;">Standart</div>
<div class="tx " style="left:1280.00px;top:936px;font-size:18px;line-height:26px;color:#0a0a0a;letter-spacing:0.089px;-webkit-text-stroke:0.2px #0a0a0a;">01.11.2025</div>
<div class="tx " style="left:1432.61px;top:923px;font-size:17.6px;line-height:26px;color:#0b1020;letter-spacing:-0.83px;-webkit-text-stroke:0.3px #0b1020;word-spacing:1.6px;">19:00 - 20:00 (01.11 - 12.12)</div>
<div class="tx " style="left:1432.51px;top:949px;font-size:17.6px;line-height:26px;color:#0b1020;letter-spacing:-0.95px;-webkit-text-stroke:0.3px #0b1020;word-spacing:1.6px;">Du, Se, Ch, Pa, Ju</div>
<div class="tx " style="left:1708.30px;top:936px;font-size:17.6px;line-height:26px;color:#0b1020;letter-spacing:0.5px;-webkit-text-stroke:0.2px #0b1020;">Asrorbek</div>
<div class="abs" style="left:1741px;top:635px;width:10px;height:355px;background:linear-gradient(90deg,rgba(0,0,0,0),rgba(0,0,0,.035))"></div>
<div class="abs" style="left:1751px;top:635px;width:130px;height:355px;background:#fff"></div>
<div class="hl" style="top:692px;left:1751px;width:130px"></div><div class="hl" style="top:776px;left:1751px;width:130px"></div><div class="hl" style="top:890px;left:1751px;width:130px"></div>
<div class="ab" style="left:1766px;top:714px"></div><div class="ab del" style="left:1826px;top:714px"></div>
<svg class="abs" style="left:1776px;top:722px" width="22" height="22" viewBox="0 0 22 22"><g fill="none" stroke="#5b6479" stroke-width="1.900" stroke-linejoin="round"><path d="M2.600 15.200 L14.800 2.800 L19.600 7 L7.400 19.300 L1.600 20.300 Z"/><path d="M12.300 5.300 L17.100 9.500"/></g></svg>
<svg class="abs" style="left:1836px;top:722px" width="21" height="22" viewBox="0 0 21 22"><g fill="none" stroke="#ff7a50" stroke-width="1.800" stroke-linejoin="round" stroke-linecap="round"><path d="M1.500 5.800 H19.500"/><path d="M6.300 5.800 V2.600 Q6.300 2 6.900 2 H14.100 Q14.700 2 14.700 2.600 V5.800"/><path d="M3.300 5.800 L4.200 20.600 H16.800 L17.700 5.800"/></g></svg>
<div class="ab" style="left:1766px;top:813px"></div><div class="ab del" style="left:1826px;top:813px"></div>
<svg class="abs" style="left:1776px;top:821px" width="22" height="22" viewBox="0 0 22 22"><g fill="none" stroke="#5b6479" stroke-width="1.900" stroke-linejoin="round"><path d="M2.600 15.200 L14.800 2.800 L19.600 7 L7.400 19.300 L1.600 20.300 Z"/><path d="M12.300 5.300 L17.100 9.500"/></g></svg>
<svg class="abs" style="left:1836px;top:821px" width="21" height="22" viewBox="0 0 21 22"><g fill="none" stroke="#ff7a50" stroke-width="1.800" stroke-linejoin="round" stroke-linecap="round"><path d="M1.500 5.800 H19.500"/><path d="M6.300 5.800 V2.600 Q6.300 2 6.900 2 H14.100 Q14.700 2 14.700 2.600 V5.800"/><path d="M3.300 5.800 L4.200 20.600 H16.800 L17.700 5.800"/></g></svg>
<div class="ab" style="left:1766px;top:928px"></div><div class="ab del" style="left:1826px;top:928px"></div>
<svg class="abs" style="left:1776px;top:936px" width="22" height="22" viewBox="0 0 22 22"><g fill="none" stroke="#5b6479" stroke-width="1.900" stroke-linejoin="round"><path d="M2.600 15.200 L14.800 2.800 L19.600 7 L7.400 19.300 L1.600 20.300 Z"/><path d="M12.300 5.300 L17.100 9.500"/></g></svg>
<svg class="abs" style="left:1836px;top:936px" width="21" height="22" viewBox="0 0 21 22"><g fill="none" stroke="#ff7a50" stroke-width="1.800" stroke-linejoin="round" stroke-linecap="round"><path d="M1.500 5.800 H19.500"/><path d="M6.300 5.800 V2.600 Q6.300 2 6.900 2 H14.100 Q14.700 2 14.700 2.600 V5.800"/><path d="M3.300 5.800 L4.200 20.600 H16.800 L17.700 5.800"/></g></svg>
<div class="abs" style="left:313px;top:990px;width:1607px;height:30px;background:#fff"></div>
</body>
</html>
